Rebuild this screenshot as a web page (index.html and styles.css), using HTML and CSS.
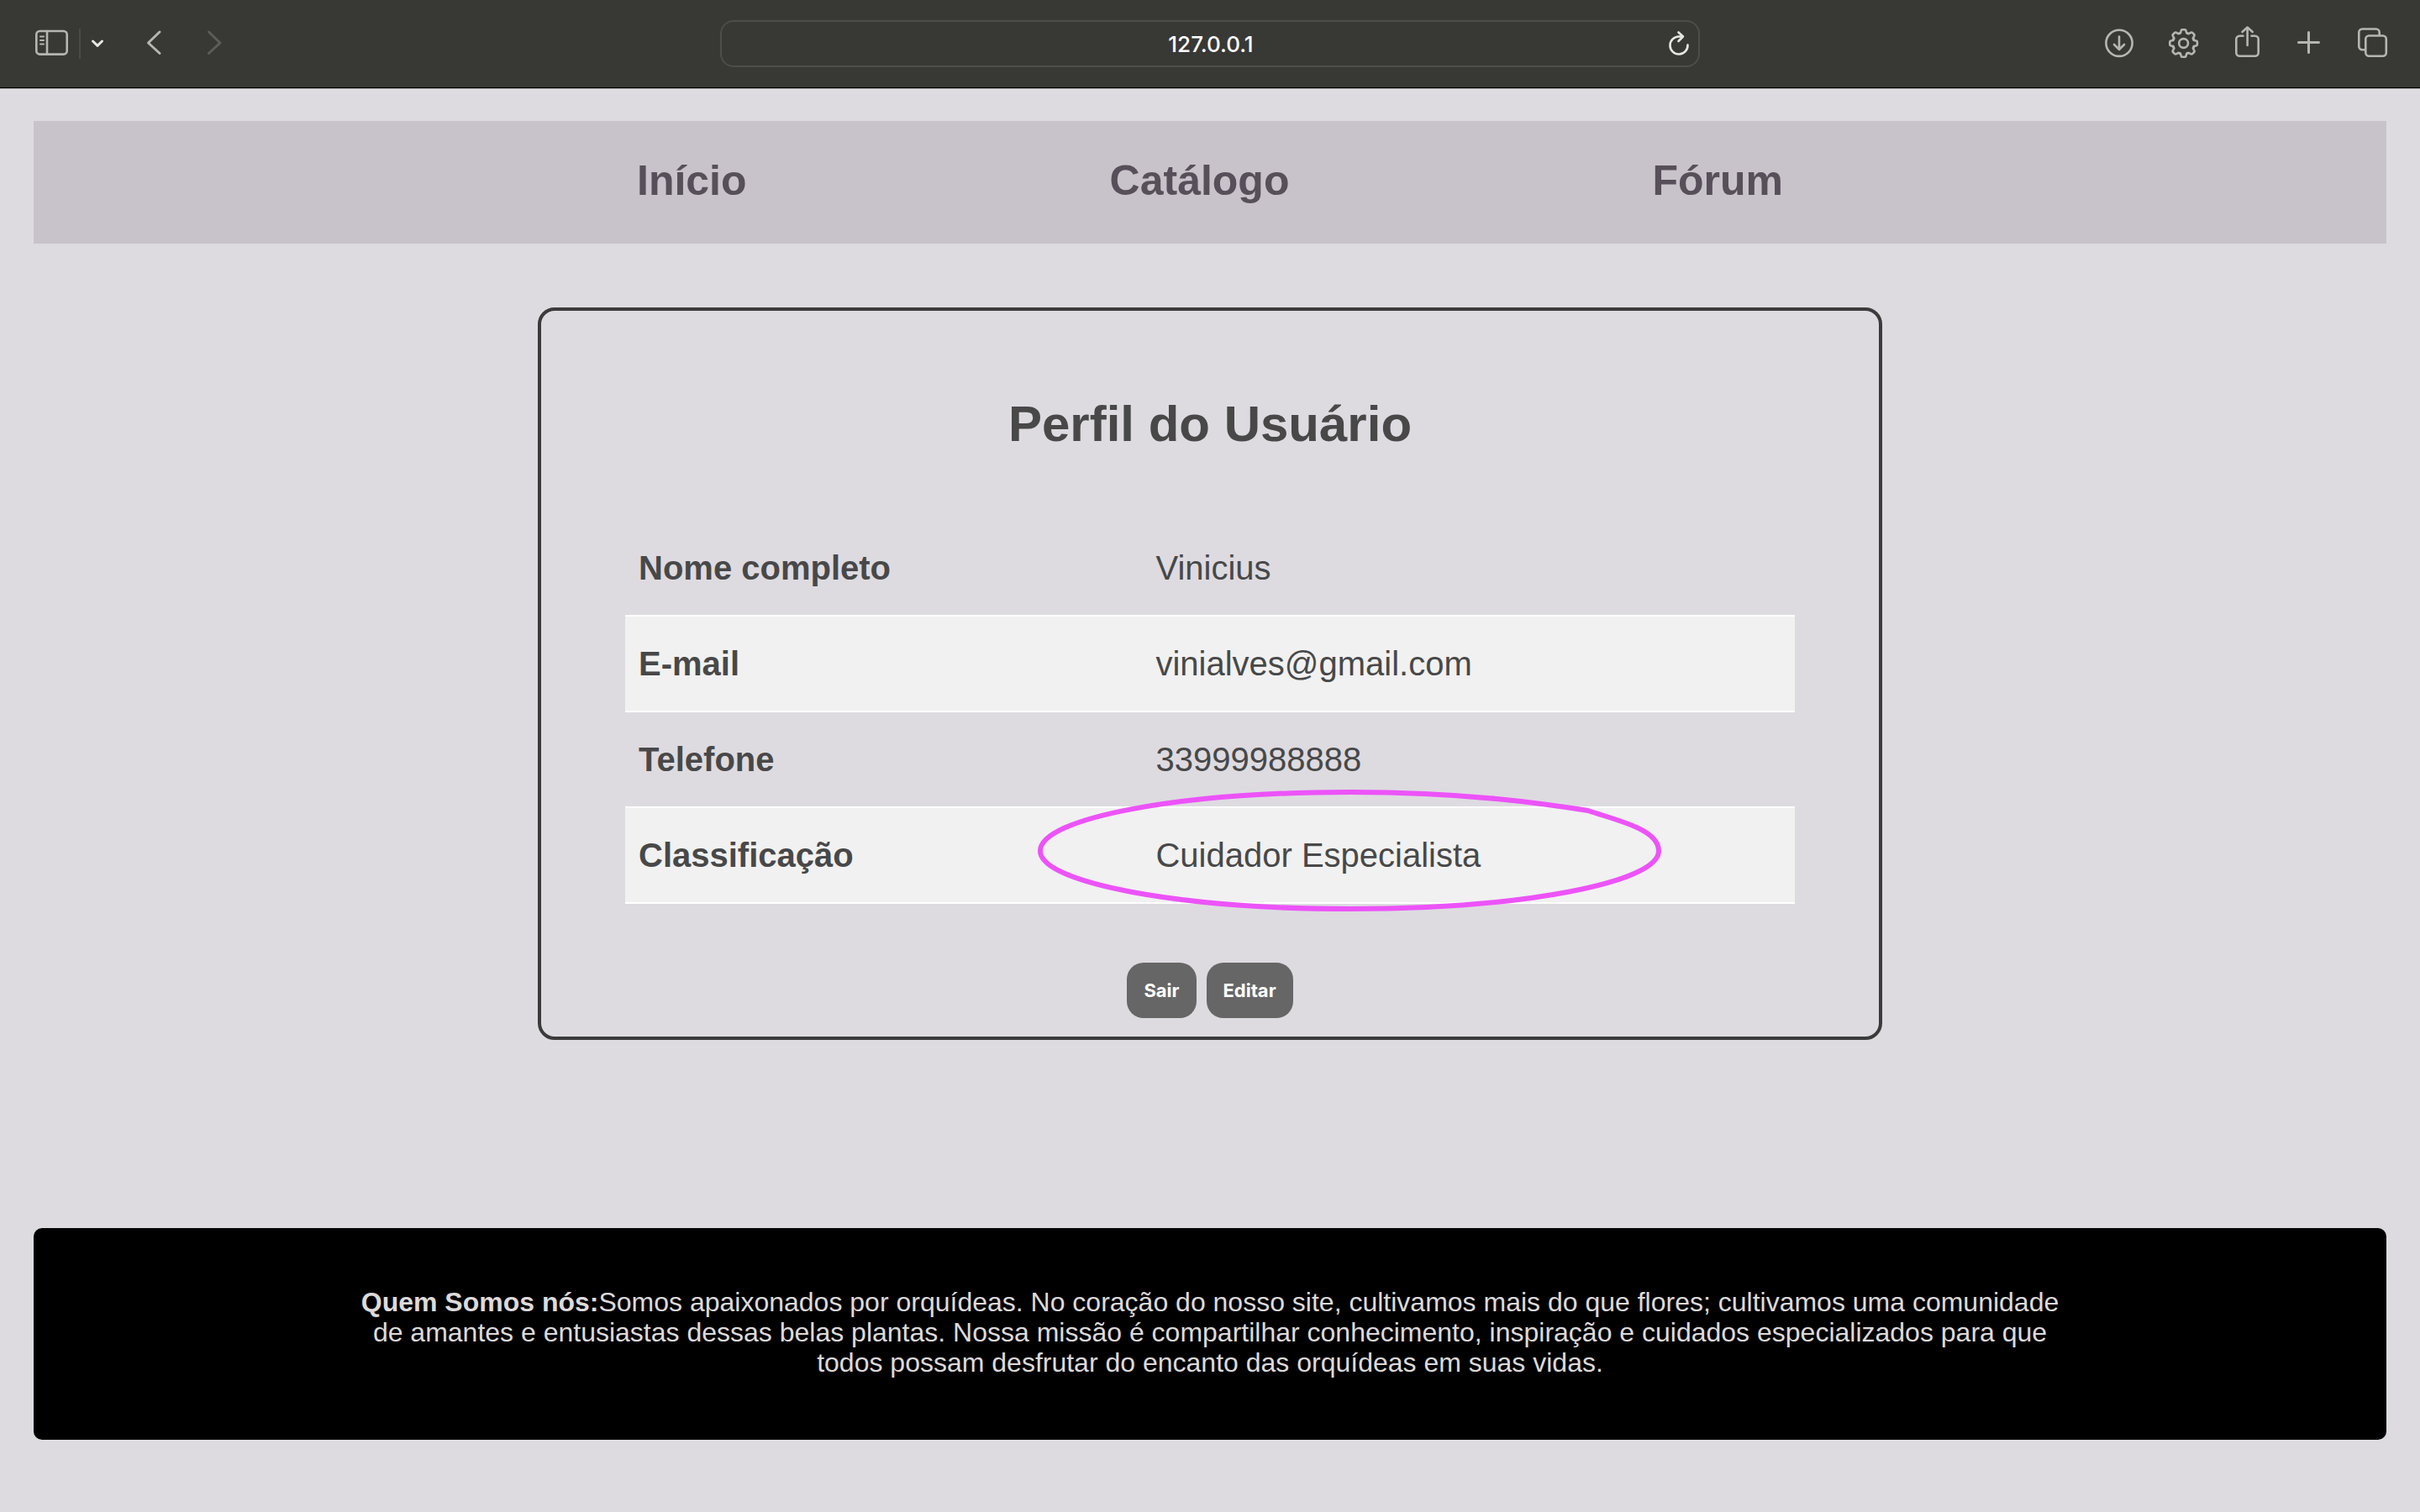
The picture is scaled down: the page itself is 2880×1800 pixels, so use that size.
FILE: index.html
```html
<!DOCTYPE html>
<html lang="pt-BR">
<head>
<meta charset="utf-8">
<meta name="viewport" content="width=device-width, initial-scale=1">
<title>Perfil do Usuário</title>
<link rel="stylesheet" href="styles.css">
</head>
<body>
<header class="toolbar">
  <div class="tools tools-left">
    <button class="tool" type="button" aria-label="Barra lateral">
      <svg width="44" height="40" viewBox="0 0 44 40"><rect x="3.3" y="5" width="36.4" height="27.6" rx="4"/><path d="M16 5V32.6"/><path class="thin" d="M8 11.5H12M8 16H12M8 20.5H12"/></svg>
    </button>
    <span class="divider"></span>
    <button class="tool bright" type="button" aria-label="Grupos de abas">
      <svg width="20" height="40" viewBox="0 0 20 40"><path class="bold" d="M4.500 17L10 22.300L15.500 17"/></svg>
    </button>
    <button class="tool step" type="button" aria-label="Voltar">
      <svg width="28" height="40" viewBox="0 0 28 40"><path class="bold" d="M20 6L6.500 19L20 31.500"/></svg>
    </button>
    <button class="tool step dim" type="button" aria-label="Avançar">
      <svg width="28" height="40" viewBox="0 0 28 40"><path class="bold" d="M6.500 6L20 19L6.500 31.500"/></svg>
    </button>
  </div>
  <div class="address">
    <input class="address-input" type="text" value="127.0.0.1" aria-label="Endereço" readonly>
    <button class="tool reload" type="button" aria-label="Recarregar">
      <svg width="28" height="32" viewBox="0 0 28 32"><path d="M24.500 17.500A10.500 10.500 0 1 1 14 7.500H18.500M13.500 2.500L19 7.500L13.500 13"/></svg>
    </button>
  </div>
  <div class="tools tools-right">
    <button class="tool" type="button" aria-label="Downloads">
      <svg width="40" height="40" viewBox="0 0 40 40"><circle cx="20" cy="19.300" r="15.600"/><path d="M20 11.500V26.500M14 21L20 27L26 21"/></svg>
    </button>
    <button class="tool" type="button" aria-label="Ajustes">
      <svg width="40" height="40" viewBox="0 0 40 40">
        <defs><path id="tooth" d="M-5 -12C-3.500 -11.400 -3.600 -12.400 -3.200 -14Q-2.800 -16.300 -1.500 -16.300H1.500Q2.800 -16.300 3.200 -14C3.600 -12.400 3.500 -11.400 5 -12"/></defs>
        <g transform="translate(20.600 19.500)">
          <circle r="5.400"/>
          <use href="#tooth"/><use href="#tooth" transform="rotate(45)"/><use href="#tooth" transform="rotate(90)"/><use href="#tooth" transform="rotate(135)"/><use href="#tooth" transform="rotate(180)"/><use href="#tooth" transform="rotate(225)"/><use href="#tooth" transform="rotate(270)"/><use href="#tooth" transform="rotate(315)"/>
        </g>
      </svg>
    </button>
    <button class="tool" type="button" aria-label="Compartilhar">
      <svg width="40" height="40" viewBox="0 0 40 40"><path d="M15.500 10.700H11.300A4 4 0 0 0 7.300 14.700V30.700A4 4 0 0 0 11.300 34.700H29.700A4 4 0 0 0 33.700 30.700V14.700A4 4 0 0 0 29.700 10.700H25.500M20.600 22V0.800M14.500 6L20.600 0.500L26.700 6"/></svg>
    </button>
    <button class="tool" type="button" aria-label="Nova aba">
      <svg width="40" height="40" viewBox="0 0 40 40"><path class="bold" d="M5.500 18.500H29.500M17.500 6.500V30.500"/></svg>
    </button>
    <button class="tool" type="button" aria-label="Visão geral das abas">
      <svg width="40" height="40" viewBox="0 0 40 40"><rect x="9.300" y="10.500" width="24.500" height="24.300" rx="4"/><path d="M8 27.300H5.300A4 4 0 0 1 1.300 23.300V6.500A4 4 0 0 1 5.300 2.500H21.700A4 4 0 0 1 25.700 6.500V9"/></svg>
    </button>
  </div>
</header>

<div class="page">
  <nav class="menu">
    <a href="#inicio">Início</a>
    <a href="#catalogo">Catálogo</a>
    <a href="#forum">Fórum</a>
  </nav>

  <main class="card">
    <h1 class="title">Perfil do Usuário</h1>
    <table class="data">
      <tbody>
        <tr><th scope="row">Nome completo</th><td>Vinicius</td></tr>
        <tr><th scope="row">E-mail</th><td>vinialves@gmail.com</td></tr>
        <tr><th scope="row">Telefone</th><td>33999988888</td></tr>
        <tr><th scope="row">Classificação</th><td class="marked">Cuidador Especialista
          <svg class="mark" width="748" height="152" viewBox="0 0 748 152" aria-hidden="true"><path d="M658 28C613 21 518 6 375 6C171 6 6 37 6 76C6 114 171 145 375 145C578 145 742 114 742 76C742 50 693 40 658 28Z"/></svg>
        </td></tr>
      </tbody>
    </table>
    <div class="actions">
      <button class="action" type="button">Sair</button>
      <button class="action" type="button">Editar</button>
    </div>
  </main>

  <footer class="about">
    <p><strong>Quem Somos nós:</strong>Somos apaixonados por orquídeas. No coração do nosso site, cultivamos mais do que flores; cultivamos uma comunidade de amantes e entusiastas dessas belas plantas. Nossa missão é compartilhar conhecimento, inspiração e cuidados especializados para que todos possam desfrutar do encanto das orquídeas em suas vidas.</p>
  </footer>
</div>
</body>
</html>
```
FILE: styles.css
```css
* {
  box-sizing: border-box;
}

body {
  margin: 0;
  background: #dddbe0;
  color: #484848;
  font-family: "Liberation Sans", Arial, sans-serif;
}

/* Browser toolbar */
.toolbar {
  display: grid;
  grid-template-columns: 1fr 40.5% 1fr;
  align-items: center;
  height: 106px;
  padding-bottom: 1px;
  border-bottom: 1px solid #a3a2a3;
  box-shadow: inset 0 -1px #000;
  background: #383835;
}

.tools {
  display: flex;
  align-items: center;
}

.tools-left {
  padding-left: 40px;
}

.tools-right {
  justify-content: flex-end;
  gap: 36px;
  padding-right: 34px;
}

.tool {
  display: flex;
  padding: 0;
  border: 0;
  background: none;
  color: #b5b5b2;
}

.tool svg {
  overflow: visible;
  fill: none;
  stroke: currentColor;
  stroke-width: 2.6;
  stroke-linecap: round;
  stroke-linejoin: round;
}

.tool .thin {
  stroke-width: 2;
}

.tool .bold {
  stroke-width: 3;
}

.divider {
  width: 2px;
  height: 36px;
  margin: 0 10px;
  background: #4a4a48;
}

.bright {
  color: #e6e6e4;
}

.step {
  margin-left: 44px;
}

.dim {
  color: #5c5c5a;
}

.address {
  display: flex;
  position: relative;
}

.address-input {
  width: 100%;
  height: 56px;
  padding: 0 48px 0 50px;
  border: 2px solid #4d4d4b;
  border-radius: 16px;
  background: transparent;
  color: #fff;
  font: 500 26px/32px Inter, "Liberation Sans", sans-serif;
  text-align: center;
}

.reload {
  position: absolute;
  top: 12px;
  right: 11px;
  color: #e6e6e4;
}

/* Page */
.page {
  padding: 38px 40px 86px;
}

.menu {
  display: flex;
  justify-content: center;
  gap: 15vw;
  padding: 42px 0 46px;
  background: #c8c3ca;
}

.menu a {
  color: #574f59;
  font-size: 50px;
  font-weight: 700;
  line-height: 58px;
  text-decoration: none;
}

.card {
  max-width: 1600px;
  margin: 76px auto 224px;
  padding: 100px 100px 22px;
  border: 4px solid #3b3b3b;
  border-radius: 20px;
}

.title {
  margin: 0 0 80px;
  font-size: 60px;
  line-height: 70px;
  text-align: center;
}

.data {
  width: 100%;
  border-spacing: 0;
  font-size: 40px;
  line-height: 46px;
}

.data th,
.data td {
  padding: 33px 16px;
  border-bottom: 2px solid #fff;
  text-align: left;
}

.data th {
  width: 44%;
}

.data td {
  padding-left: 19px;
}

.data tr:nth-child(even) {
  background: #f1f1f1;
}

.marked {
  position: relative;
}

/* Hand-drawn ring over the classification */
.mark {
  position: absolute;
  top: -25px;
  left: -124px;
  fill: none;
  stroke: #ec53f8;
  stroke-width: 6;
  stroke-linejoin: round;
}

.actions {
  display: flex;
  justify-content: center;
  gap: 12px;
  margin-top: 70px;
}

.action {
  padding: 18px 20px;
  border: 0;
  border-radius: 20px;
  background: #666;
  color: #fff;
  font: 700 22px/30px Inter, "Liberation Sans", sans-serif;
}

.about {
  padding: 70px 0 74px;
  border-radius: 10px;
  background: #000;
  color: #dddada;
}

.about p {
  width: 73%;
  margin: 0 auto;
  font-size: 32px;
  line-height: 36px;
  text-align: center;
}
```
